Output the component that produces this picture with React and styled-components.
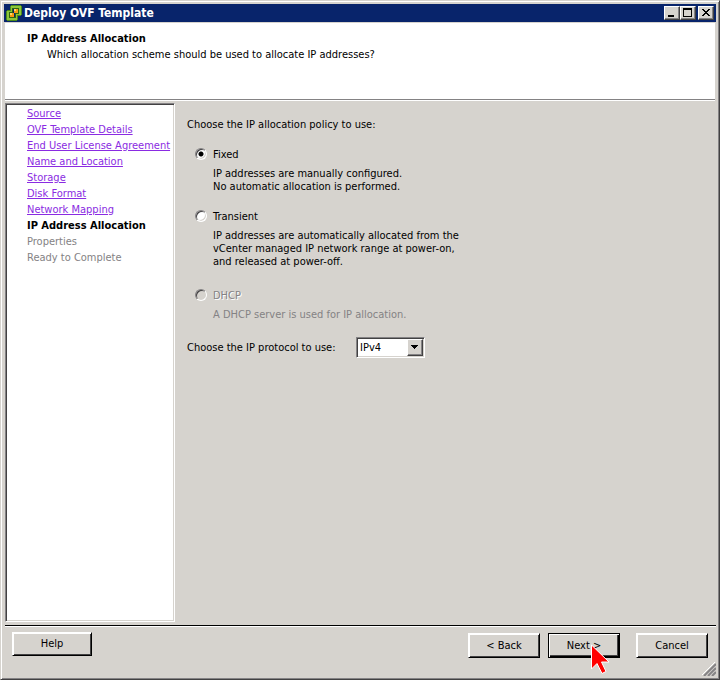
import React, { useState } from "react";
import styled, { createGlobalStyle, css } from "styled-components";

const face = "#d6d3ce";
const shadow = "#848284";
const dark = "#424142";
const navy = "#08246b";

const GlobalStyle = createGlobalStyle`
  * {
    box-sizing: border-box;
  }

  body {
    margin: 0;
    background: ${face};
    color: #000;
    font: 11px/16px "DejaVu Sans Condensed", "Noto Sans", sans-serif;
  }
`;

const Window = styled.div`
  display: flex;
  flex-direction: column;
  min-height: 100vh;
  padding: 2px;
  background: ${face};
  border: 1px solid;
  border-color: ${face} ${dark} ${dark} ${face};
  box-shadow: inset 1px 1px #fff, inset -1px -1px ${shadow};
`;

const TitleBar = styled.header`
  display: flex;
  align-items: center;
  height: 18px;
  margin: 1px 1px 0;
  padding: 0 2px;
  background: ${navy};
  color: #fff;
`;

const WindowTitle = styled.h1`
  flex: 1;
  margin: 0 0 0 2px;
  font-size: 12px;
  line-height: 18px;
`;

const WindowButton = styled.button`
  display: flex;
  width: 16px;
  height: 14px;
  margin-left: ${(props) => (props.$apart ? "2px" : "0")};
  padding: 0;
  background: ${face};
  border: 1px solid;
  border-color: #fff ${dark} ${dark} #fff;
  box-shadow: inset -1px -1px ${shadow};
`;

const Banner = styled.section`
  height: 78px;
  margin: 1px 2px 0;
  padding: 8px 22px;
  background: #fff;
  border-bottom: 1px solid #fff;
  box-shadow: inset 0 -1px ${shadow};

  h2 {
    margin: 0;
    font-size: 11px;
    line-height: 16px;
  }

  p {
    margin: 0;
    padding-left: 20px;
  }
`;

const Body = styled.div`
  display: flex;
  flex: 1;
  margin: 2px 2px 3px;
`;

const Sidebar = styled.nav`
  width: 170px;
  background: #fff;
  border: 1px solid;
  border-color: ${shadow} #fff #fff ${shadow};
  box-shadow: inset 1px 1px ${dark}, inset -1px -1px ${face};

  ol {
    margin: 0;
    padding: 2px 0 0 21px;
    list-style: none;
    white-space: nowrap;
  }
`;

const Step = styled.li`
  color: ${(props) => (props.$current ? "#000" : shadow)};
  font-weight: ${(props) => (props.$current ? "bold" : "normal")};

  a {
    color: #8a2be2;
  }
`;

const Content = styled.main`
  flex: 1;
  padding: 14px 12px;

  > p {
    margin: 0;
  }
`;

const OptionGroup = styled.div`
  display: flex;
  flex-direction: column;
  gap: 16px;
  margin-top: ${(props) => props.$gap}px;
  padding-left: 8px;
`;

const Option = styled.div`
  display: grid;
  grid-template-columns: 18px 1fr;
  row-gap: 4px;

  label {
    justify-self: start;
  }

  label,
  p {
    color: ${(props) => (props.$disabled ? shadow : "#000")};
  }

  label {
    text-shadow: ${(props) => (props.$disabled ? "1px 1px #fff" : "none")};
  }

  p {
    grid-column: 2;
    margin: 0;
    line-height: 13px;
    white-space: pre-line;
  }
`;

const Radio = styled.input`
  appearance: none;
  width: 12px;
  height: 12px;
  margin: 1px 0 0;
  background: #fff;
  border: 1px solid;
  border-color: ${shadow} #fff #fff ${shadow};
  border-radius: 50%;
  box-shadow: inset 1px 1px ${dark}, inset -1px -1px ${face};

  &:checked {
    background: radial-gradient(circle, #000 2px, #fff 3px);
  }

  &:disabled {
    background: ${face};
  }
`;

const ProtocolRow = styled.div`
  display: flex;
  align-items: center;
  margin-top: 16px;

  label {
    width: 169px;
  }
`;

const SelectFrame = styled.div`
  position: relative;
  width: 69px;
  height: 21px;
  padding: 1px;
  background: #fff;
  border: 1px solid;
  border-color: ${shadow} #fff #fff ${shadow};
  box-shadow: inset 1px 1px ${dark}, inset -1px -1px ${face};

  select {
    appearance: none;
    width: 100%;
    height: 100%;
    padding: 0 18px 0 2px;
    background: none;
    border: 0;
    color: #000;
    font: inherit;
  }
`;

const SelectArrow = styled.span`
  position: absolute;
  top: 1px;
  right: 1px;
  bottom: 1px;
  width: 16px;
  background: ${face};
  border: 1px solid;
  border-color: #fff ${dark} ${dark} #fff;
  box-shadow: inset -1px -1px ${shadow};
  pointer-events: none;

  svg {
    display: block;
  }
`;

const Footer = styled.footer`
  display: flex;
  gap: 8px;
  height: 52px;
  margin: 0 1px 0 2px;
  padding: 6px 8px 0 7px;
  border-top: 1px solid #000;
  box-shadow: inset 0 1px #fff;
`;

const Spacer = styled.div`
  flex: 1;
`;

const Button = styled.button`
  position: relative;
  width: ${(props) => (props.$wide ? 80 : 72)}px;
  height: ${(props) => (props.$wide ? 24 : 25)}px;
  margin-top: ${(props) => (props.$wide ? 0 : 1)}px;
  margin-left: ${(props) => (props.$apart ? 8 : 0)}px;
  padding: 0;
  background: ${face};
  border: 1px solid;
  border-color: #fff #000 #000 #fff;
  box-shadow: inset 1px 1px #fff, inset -1px -1px ${dark};
  color: #000;
  font: inherit;

  ${(props) =>
    props.$primary &&
    css`
      border-color: #000;
      box-shadow: inset 1px 1px #fff, inset -1px -1px #000,
        inset -2px -2px ${dark};
    `}
`;

const Pointer = styled.svg`
  position: absolute;
  top: 10px;
  left: 41px;
  z-index: 1;
`;

const Grip = styled.svg`
  position: fixed;
  right: 4px;
  bottom: 4px;
`;

const steps = [
  { name: "Source", done: true },
  { name: "OVF Template Details", done: true },
  { name: "End User License Agreement", done: true },
  { name: "Name and Location", done: true },
  { name: "Storage", done: true },
  { name: "Disk Format", done: true },
  { name: "Network Mapping", done: true },
  { name: "IP Address Allocation", current: true },
  { name: "Properties" },
  { name: "Ready to Complete" },
];

const options = [
  {
    id: "fixed",
    name: "Fixed",
    text: "IP addresses are manually configured.\nNo automatic allocation is performed.",
  },
  {
    id: "transient",
    name: "Transient",
    text: "IP addresses are automatically allocated from the\nvCenter managed IP network range at power-on,\nand released at power-off.",
  },
];

const AppIcon = () => (
  <svg width="16" height="16" viewBox="0 0 16 16" shapeRendering="crispEdges">
    <path
      fill="#4a8a18"
      d="M5 0H15V1H16V10H15V11H12V15H11V16H1V15H0V6H1V5H4V1H5Z"
    />
    <path fill="#8cc63a" d="M5 1H15V10H11V15H1V6H5Z" />
    <path fill="#316510" d="M6 3H13V9H10V13H3V7H6Z" />
    <path fill={navy} d="M7 4H12V8H9V12H4V8H7Z" />
    <path fill="#f79a10" d="M8 4H12V8H8ZM4 8H8V12H4Z" />
    <path fill="#ffd763" d="M8 4H10V6H8ZM4 8H6V10H4Z" />
  </svg>
);

const OptionRow = ({ option, checked, onChange, disabled }) => (
  <Option $disabled={disabled}>
    <Radio
      type="radio"
      name="policy"
      id={option.id}
      checked={checked}
      onChange={onChange}
      disabled={disabled}
    />
    <label htmlFor={option.id}>{option.name}</label>
    <p>{option.text}</p>
  </Option>
);

const App = () => {
  const [policy, setPolicy] = useState("fixed");
  const [protocol, setProtocol] = useState("IPv4");

  return (
    <>
      <GlobalStyle />
      <Window>
        <TitleBar>
          <AppIcon />
          <WindowTitle>Deploy OVF Template</WindowTitle>
          <WindowButton aria-label="Minimize">
            <svg width="14" height="12" shapeRendering="crispEdges">
              <path d="M3 8H9V10H3Z" />
            </svg>
          </WindowButton>
          <WindowButton aria-label="Maximize">
            <svg width="14" height="12" shapeRendering="crispEdges">
              <path fillRule="evenodd" d="M2 1H11V10H2ZM3 3V9H10V3Z" />
            </svg>
          </WindowButton>
          <WindowButton $apart aria-label="Close">
            <svg width="14" height="12" shapeRendering="crispEdges">
              <path d="M3 2H5V3H6V4H8V3H9V2H11V3H10V4H9V5H8V6H9V7H10V8H11V9H9V8H8V7H6V8H5V9H3V8H4V7H5V6H6V5H5V4H4V3H3Z" />
            </svg>
          </WindowButton>
        </TitleBar>

        <Banner>
          <h2>IP Address Allocation</h2>
          <p>Which allocation scheme should be used to allocate IP addresses?</p>
        </Banner>

        <Body>
          <Sidebar>
            <ol>
              {steps.map((step) => (
                <Step key={step.name} $current={step.current}>
                  {step.done ? <a href="#step">{step.name}</a> : step.name}
                </Step>
              ))}
            </ol>
          </Sidebar>

          <Content>
            <p>Choose the IP allocation policy to use:</p>
            <OptionGroup $gap={14}>
              {options.map((option) => (
                <OptionRow
                  key={option.id}
                  option={option}
                  checked={policy === option.id}
                  onChange={() => setPolicy(option.id)}
                />
              ))}
            </OptionGroup>
            <OptionGroup $gap={20}>
              <OptionRow
                option={{
                  id: "dhcp",
                  name: "DHCP",
                  text: "A DHCP server is used for IP allocation.",
                }}
                checked={false}
                onChange={() => {}}
                disabled
              />
            </OptionGroup>
            <ProtocolRow>
              <label htmlFor="protocol">Choose the IP protocol to use:</label>
              <SelectFrame>
                <select
                  id="protocol"
                  value={protocol}
                  onChange={(e) => setProtocol(e.target.value)}
                >
                  <option>IPv4</option>
                  <option>IPv6</option>
                </select>
                <SelectArrow>
                  <svg width="14" height="15" shapeRendering="crispEdges">
                    <path d="M3 5H10V6H9V7H8V8H7V9H6V8H5V7H4V6H3Z" />
                  </svg>
                </SelectArrow>
              </SelectFrame>
            </ProtocolRow>
          </Content>
        </Body>

        <Footer>
          <Button $wide>Help</Button>
          <Spacer />
          <Button>&lt; Back</Button>
          <Button $primary>
            Next &gt;
            <Pointer width="22" height="32" viewBox="0 0 22 32">
              <path
                fill="#f00"
                stroke="#fff"
                d="M1.5 1V25L7 19.5L12 29.5L16 27.5L11.5 18H19Z"
              />
            </Pointer>
          </Button>
          <Button $apart>Cancel</Button>
        </Footer>
        <Grip width="14" height="14" viewBox="0 0 14 14">
          <path stroke="#fff" d="M0 13L13 0M4 13L13 4M8 13L13 8" />
          <path
            stroke={shadow}
            strokeWidth="2"
            d="M2 14L14 2M6 14L14 6M10 14L14 10"
          />
        </Grip>
      </Window>
    </>
  );
};

export default App;
